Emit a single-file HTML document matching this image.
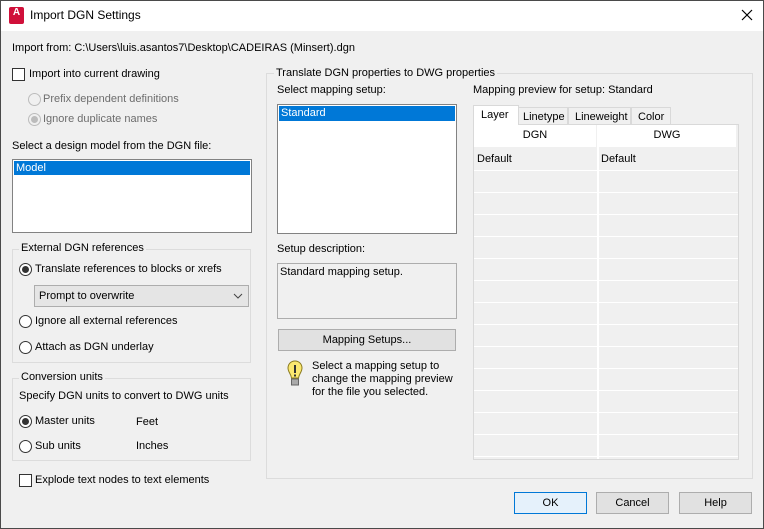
<!DOCTYPE html>
<html><head><style>
*{box-sizing:border-box;margin:0;padding:0}
body{width:764px;height:529px;background:#f0f0f0;font-family:"Liberation Sans",sans-serif;font-size:11px;line-height:15px;color:#000;position:relative;overflow:hidden}
.a{position:absolute;white-space:nowrap}
.win{position:absolute;left:0;top:0;width:764px;height:529px;border:1px solid #4a4a4a}
.title{position:absolute;left:1px;top:1px;width:762px;height:30px;background:#fff}
.grp{position:absolute;border:1px solid #dcdcdc}
.lbl{position:absolute;background:#f0f0f0;padding:0 2px}
.list{position:absolute;background:#fff;border:1px solid #828282}
.sel{position:absolute;background:#0078d7;color:#fff;padding-left:2px;height:14px;line-height:14px}
.cb{position:absolute;width:13px;height:13px;border:1px solid #333;background:#fff}
.rb{position:absolute;width:13px;height:13px;border:1px solid #333;border-radius:50%;background:#fff}
.rb.on:after{content:"";position:absolute;left:2px;top:2px;width:7px;height:7px;border-radius:50%;background:#333}
.rb.dis{border-color:#bcbcbc;background:#f0f0f0}
.rb.dis.on:after{background:#bcbcbc}
.btn{position:absolute;background:#e1e1e1;border:1px solid #adadad;text-align:center}
.gray{color:#6d6d6d}
</style></head><body>
<div class="win"></div>
<div class="title"></div>
<div class="a" style="left:9px;top:7px;width:15px;height:17px;background:#d0103a;border-radius:2px;color:#fff;font-weight:bold;font-size:10px;text-align:center;line-height:12px">A</div>
<div class="a" style="left:30px;top:8px;font-size:12px">Import DGN Settings</div>
<svg class="a" style="left:741px;top:9px" width="12" height="12"><path d="M1 1L11 11M11 1L1 11" stroke="#000" stroke-width="1.2"/></svg>

<div class="a" style="left:12px;top:41px">Import from: C:\Users\luis.asantos7\Desktop\CADEIRAS (Minsert).dgn</div>

<div class="cb" style="left:12px;top:68px"></div>
<div class="a" style="left:29px;top:67px">Import into current drawing</div>
<div class="rb dis" style="left:28px;top:93px"></div>
<div class="a gray" style="left:43px;top:92px">Prefix dependent definitions</div>
<div class="rb dis on" style="left:28px;top:113px"></div>
<div class="a gray" style="left:43px;top:112px">Ignore duplicate names</div>

<div class="a" style="left:12px;top:139px">Select a design model from the DGN file:</div>
<div class="list" style="left:12px;top:159px;width:240px;height:74px"><div class="sel" style="left:1px;top:1px;width:236px">Model</div></div>

<div class="grp" style="left:12px;top:249px;width:239px;height:114px"></div>
<div class="lbl a" style="left:19px;top:241px">External DGN references</div>
<div class="rb on" style="left:19px;top:263px"></div>
<div class="a" style="left:35px;top:262px">Translate references to blocks or xrefs</div>
<div class="a" style="left:34px;top:285px;width:215px;height:22px;background:#e5e5e5;border:1px solid #adadad;padding:3px 0 0 4px">Prompt to overwrite</div>
<svg class="a" style="left:233px;top:293px" width="10" height="6"><path d="M1 1L5 5L9 1" stroke="#444" fill="none"/></svg>
<div class="rb" style="left:19px;top:315px"></div>
<div class="a" style="left:35px;top:314px">Ignore all external references</div>
<div class="rb" style="left:19px;top:341px"></div>
<div class="a" style="left:35px;top:340px">Attach as DGN underlay</div>

<div class="grp" style="left:12px;top:378px;width:239px;height:83px"></div>
<div class="lbl a" style="left:19px;top:370px">Conversion units</div>
<div class="a" style="left:19px;top:389px">Specify DGN units to convert to DWG units</div>
<div class="rb on" style="left:19px;top:415px"></div>
<div class="a" style="left:35px;top:414px">Master units</div>
<div class="a" style="left:136px;top:415px">Feet</div>
<div class="rb" style="left:19px;top:440px"></div>
<div class="a" style="left:35px;top:439px">Sub units</div>
<div class="a" style="left:136px;top:439px">Inches</div>

<div class="cb" style="left:19px;top:474px"></div>
<div class="a" style="left:35px;top:473px">Explode text nodes to text elements</div>

<div class="grp" style="left:266px;top:73px;width:487px;height:406px"></div>
<div class="lbl a" style="left:274px;top:66px">Translate DGN properties to DWG properties</div>
<div class="a" style="left:277px;top:83px">Select mapping setup:</div>
<div class="list" style="left:277px;top:104px;width:180px;height:130px"><div class="sel" style="left:1px;top:1px;width:176px;height:15px">Standard</div></div>
<div class="a" style="left:277px;top:242px">Setup description:</div>
<div class="a" style="left:277px;top:263px;width:180px;height:56px;border:1px solid #adadad;padding:1px 2px">Standard mapping setup.</div>
<div class="btn" style="left:278px;top:329px;width:178px;height:22px;line-height:20px">Mapping Setups...</div>
<svg class="a" style="left:286px;top:360px" width="18" height="30" viewBox="0 0 18 30"><path d="M9 1C4.5 1 2 4.5 2 8c0 4 3 6 3.5 10h7C13 14 16 12 16 8 16 4.5 13.5 1 9 1z" fill="#fbe870" stroke="#8a7a20" stroke-width="1"/><rect x="5.5" y="19" width="7" height="6" fill="#aaa" stroke="#666"/><rect x="8" y="5" width="2" height="8" fill="#333"/><rect x="8" y="14.5" width="2" height="2" fill="#333"/></svg>
<div class="a" style="left:312px;top:360px;line-height:13px">Select a mapping setup to<br>change the mapping preview<br>for the file you selected.</div>

<div class="a" style="left:473px;top:83px">Mapping preview for setup: Standard</div>
<div class="a" style="left:473px;top:105px;width:46px;height:20px;background:#fff;border:1px solid #d9d9d9;border-bottom:none;padding:2px 0 0 7px;z-index:2">Layer</div>
<div class="a" style="left:518px;top:107px;width:50px;height:18px;border:1px solid #d9d9d9;padding:2px 0 0 4px">Linetype</div>
<div class="a" style="left:568px;top:107px;width:63px;height:18px;border:1px solid #d9d9d9;padding:2px 0 0 6px">Lineweight</div>
<div class="a" style="left:631px;top:107px;width:40px;height:18px;border:1px solid #d9d9d9;padding:2px 0 0 6px">Color</div>
<div class="a" style="left:473px;top:124px;width:266px;height:336px;border:1px solid #d9d9d9;background:#f0f0f0;
background-image:linear-gradient(#fff,#fff),repeating-linear-gradient(to bottom,transparent 0,transparent 21px,#fff 21px,#fff 22px);background-size:2px 100%,100% 100%;background-position:123px 0,0 24px;background-repeat:no-repeat,no-repeat"></div>
<div class="a" style="left:474px;top:125px;width:122px;height:22px;background:#fff;text-align:center;line-height:20px">DGN</div>
<div class="a" style="left:598px;top:125px;width:138px;height:22px;background:#fff;text-align:center;line-height:20px">DWG</div>
<div class="a" style="left:477px;top:152px">Default</div>
<div class="a" style="left:601px;top:152px">Default</div>

<div class="btn" style="left:514px;top:492px;width:73px;height:22px;line-height:20px;background:#e5f1fb;border-color:#0078d7">OK</div>
<div class="btn" style="left:596px;top:492px;width:73px;height:22px;line-height:20px">Cancel</div>
<div class="btn" style="left:679px;top:492px;width:73px;height:22px;line-height:20px">Help</div>
</body></html>
